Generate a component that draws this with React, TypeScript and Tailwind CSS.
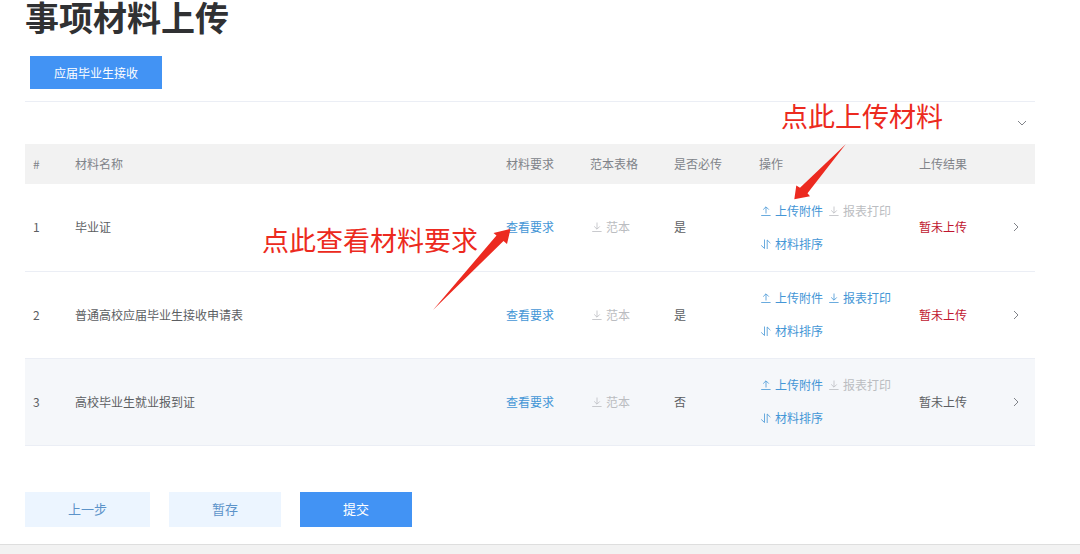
import { useState } from "react";
import type { ReactNode } from "react";

type Material = {
  id: number;
  name: string;
  required: boolean;
  canPrint: boolean;
}

const materials: Material[] = [
  { id: 1, name: "毕业证", required: true, canPrint: false },
  { id: 2, name: "普通高校应届毕业生接收申请表", required: true, canPrint: true },
  { id: 3, name: "高校毕业生就业报到证", required: false, canPrint: false },
]

const Icon = ({ children }: { children: ReactNode }) => (
  <svg width="12" height="12" viewBox="0 0 12 12" fill="none" stroke="currentColor" strokeWidth="0.8" className="shrink-0" aria-hidden="true">
    {children}
  </svg>
)

const UploadIcon = () => (
  <Icon>
    <path d="M7 8.5V2M4.2 4.6 7 1.8l2.8 2.8M2.2 10.5h9.4" />
  </Icon>
)

const DownloadIcon = () => (
  <Icon>
    <path d="M7 1.5V8M4.2 5.4 7 8.2l2.8-2.8M2.2 10.5h9.4" />
  </Icon>
)

const SortIcon = () => (
  <Icon>
    <path d="M5.5 1.5v9L2.2 7.4M8.2 11V2l3.2 3.2" />
  </Icon>
)

const ChevronRight = () => (
  <Icon>
    <path d="M4 2l4 4-4 4" strokeWidth="1" />
  </Icon>
)

const ChevronDown = () => (
  <Icon>
    <path d="M2 4l4 4 4-4" strokeWidth="1" />
  </Icon>
)

function Action({ icon, label, disabled }: { icon?: ReactNode; label: string; disabled?: boolean }) {
  return (
    <button
      type="button"
      disabled={disabled}
      className="flex items-center gap-1 whitespace-nowrap text-[#4496d6] cursor-pointer disabled:text-[#bbbdc1] disabled:cursor-not-allowed"
    >
      {icon}
      {label}
    </button>
  )
}

export default function App() {
  const [open, setOpen] = useState(true)

  return (
    <div className="min-h-screen flex flex-col bg-white text-xs text-[#5c5e62] font-['Noto_Sans_CJK_SC',sans-serif]">
      <main className="pl-[25px] pr-[45px]">
        <h1 className="text-[34px] leading-[34px] font-bold text-[#303133]">事项材料上传</h1>

        <div className="pt-[22px] pb-3 pl-[5px] border-b border-[#ebeef5]">
          <button type="button" className="block h-[33px] px-6 bg-[#4293f4] text-white cursor-pointer">
            应届毕业生接收
          </button>
        </div>

        <section className="relative">
          <div className="h-[42px] flex items-center justify-end pr-[7px] text-[#808389]">
            <button type="button" aria-label="展开" aria-expanded={open} onClick={() => setOpen(!open)} className="cursor-pointer">
              <ChevronDown />
            </button>
          </div>

          {open && (
            <table className="w-full table-fixed text-left">
              <thead>
                <tr className="h-10 bg-[#f2f2f2] text-[#808389]">
                  <th className="w-[42px] px-2 font-normal">#</th>
                  <th className="px-2 font-normal">材料名称</th>
                  <th className="w-[84px] px-2 font-normal">材料要求</th>
                  <th className="w-[84px] px-2 font-normal">范本表格</th>
                  <th className="w-[85px] px-2 font-normal">是否必传</th>
                  <th className="w-[160px] px-2 font-normal">操作</th>
                  <th className="w-[91px] px-2 font-normal">上传结果</th>
                  <th className="w-[33px]"></th>
                </tr>
              </thead>
              <tbody>
                {materials.map((item) => (
                  <tr key={item.id} className={`h-[87px] border-b border-[#ebeef5] ${item.id === 3 ? "bg-[#f5f7fa]" : ""}`}>
                    <td className="px-2">{item.id}</td>
                    <td className="px-2">{item.name}</td>
                    <td className="px-2"><Action label="查看要求" /></td>
                    <td className="px-2"><Action icon={<DownloadIcon />} label="范本" disabled /></td>
                    <td className="px-2">{item.required ? "是" : "否"}</td>
                    <td className="pl-2">
                      <div className="flex h-[33px] items-center gap-1">
                        <Action icon={<UploadIcon />} label="上传附件" />
                        <Action icon={<DownloadIcon />} label="报表打印" disabled={!item.canPrint} />
                      </div>
                      <div className="flex h-[33px] items-center">
                        <Action icon={<SortIcon />} label="材料排序" />
                      </div>
                    </td>
                    <td className={`px-2 ${item.required ? "text-[#c0152f]" : ""}`}>暂未上传</td>
                    <td className="pl-2">
                      <button type="button" aria-label="详情" className="block text-[#808389] cursor-pointer">
                        <ChevronRight />
                      </button>
                    </td>
                  </tr>
                ))}
              </tbody>
            </table>
          )}

          {/* Red guide notes on top of the table */}
          <div className="absolute -top-0.5 right-[92px] text-[27px] leading-8 text-[#ec2a20] pointer-events-none">点此上传材料</div>
          <svg width="54" height="58" viewBox="0 0 54 58" className="absolute top-[42px] right-[188px] pointer-events-none" aria-hidden="true">
            <path d="M52.7 .3 14.5 49.3 17 52.3 1.3 55.3 3.3 41.5 7 43.7Z" fill="#ec2a20" />
          </svg>

          <div className="absolute top-[122px] right-[557px] text-[27px] leading-8 text-[#ec2a20] pointer-events-none">点此查看材料要求</div>
          <svg width="80" height="84" viewBox="0 0 80 84" className="absolute top-[126px] right-[523px] pointer-events-none" aria-hidden="true">
            <path d="M1 82 64.5 7.5 61.5 5 78.5 1 75 16 71.5 13Z" fill="#ec2a20" />
          </svg>
        </section>

        <div className="flex gap-[19px] pt-[46px] pb-[17px] text-[13px] text-[#5c93c9]">
          <button type="button" className="h-[35px] w-[125px] bg-[#ecf5ff] cursor-pointer">上一步</button>
          <button type="button" className="h-[35px] w-[112px] bg-[#ecf5ff] cursor-pointer">暂存</button>
          <button type="button" className="h-[35px] w-[112px] bg-[#4293f4] text-white cursor-pointer">提交</button>
        </div>
      </main>
      <footer className="flex-1 border-t border-[#dedede] bg-[#f2f2f2]"></footer>
    </div>
  )
}
